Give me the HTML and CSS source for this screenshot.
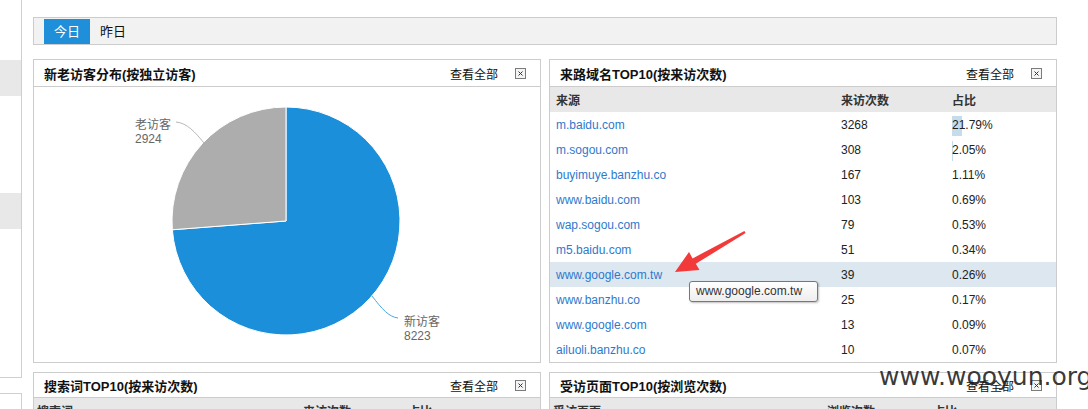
FILE: index.html
```html
<!DOCTYPE html>
<html lang="zh-CN">
<head>
<meta charset="utf-8">
<title>统计</title>
<link rel="stylesheet" href="styles.css">
</head>
<body>
<div class="page">
  <aside class="side">
    <div class="side-top">
      <div class="side-blk first"></div>
      <div class="side-blk second"></div>
    </div>
    <div class="side-bottom"></div>
  </aside>

  <main class="main">
    <div class="tabs">
      <span class="tab active">今日</span>
      <span class="tab">昨日</span>
    </div>

    <div class="grid">
      <section class="panel tall">
        <header class="panel-head">
          <h3 class="panel-title">新老访客分布(按独立访客)</h3>
          <span class="more">查看全部</span>
          <svg class="close" width="11" height="11" viewBox="0 0 11 11"><rect x="0.5" y="0.5" width="10" height="10" fill="#f4f4f4" stroke="#7b7b7b"/><path d="M3.5 3.5 L7.5 7.5 M7.5 3.5 L3.5 7.5" stroke="#333" stroke-width="1"/></svg>
        </header>
        <div class="pie-body">
          <svg class="pie" width="506" height="274" viewBox="0 0 506 274">
            <path d="M252 134 L138.34 142.75 A114 114 0 1 0 252 20 Z" fill="#1b8fd9" stroke="#fff" stroke-width="1"/>
            <path d="M252 134 L252 20 A114 114 0 0 0 138.34 142.75 Z" fill="#adadad" stroke="#fff" stroke-width="1"/>
            <path d="M142 35 C153 36 161 45 170 56" fill="none" stroke="#b8b8b8" stroke-width="1"/>
            <path d="M338 209 C348 222 355 230 364 231" fill="none" stroke="#4aa6e3" stroke-width="1"/>
            <text x="101" y="42" class="pie-label">老访客</text>
            <text x="101" y="56" class="pie-label">2924</text>
            <text x="370" y="239" class="pie-label">新访客</text>
            <text x="370" y="253" class="pie-label">8223</text>
          </svg>
        </div>
      </section>

      <section class="panel tall">
        <header class="panel-head">
          <h3 class="panel-title">来路域名TOP10(按来访次数)</h3>
          <span class="more">查看全部</span>
          <svg class="close" width="11" height="11" viewBox="0 0 11 11"><rect x="0.5" y="0.5" width="10" height="10" fill="#f4f4f4" stroke="#7b7b7b"/><path d="M3.5 3.5 L7.5 7.5 M7.5 3.5 L3.5 7.5" stroke="#333" stroke-width="1"/></svg>
        </header>
        <div class="table ref">
          <div class="tr th"><span>来源</span><span>来访次数</span><span>占比</span></div>
          <div class="tr"><a class="link">m.baidu.com</a><span>3268</span><span class="pct"><i class="bar" style="width:10px"></i><b>21.79%</b></span></div>
          <div class="tr"><a class="link">m.sogou.com</a><span>308</span><span class="pct"><i class="bar" style="width:1px"></i><b>2.05%</b></span></div>
          <div class="tr"><a class="link">buyimuye.banzhu.co</a><span>167</span><span class="pct"><b>1.11%</b></span></div>
          <div class="tr"><a class="link">www.baidu.com</a><span>103</span><span class="pct"><b>0.69%</b></span></div>
          <div class="tr"><a class="link">wap.sogou.com</a><span>79</span><span class="pct"><b>0.53%</b></span></div>
          <div class="tr"><a class="link">m5.baidu.com</a><span>51</span><span class="pct"><b>0.34%</b></span></div>
          <div class="tr hover"><a class="link">www.google.com.tw</a><span>39</span><span class="pct"><b>0.26%</b></span></div>
          <div class="tr"><a class="link">www.banzhu.co</a><span>25</span><span class="pct"><b>0.17%</b></span></div>
          <div class="tr"><a class="link">www.google.com</a><span>13</span><span class="pct"><b>0.09%</b></span></div>
          <div class="tr"><a class="link">ailuoli.banzhu.co</a><span>10</span><span class="pct"><b>0.07%</b></span></div>
        </div>
      </section>

      <section class="panel">
        <header class="panel-head">
          <h3 class="panel-title">搜索词TOP10(按来访次数)</h3>
          <span class="more">查看全部</span>
          <svg class="close" width="11" height="11" viewBox="0 0 11 11"><rect x="0.5" y="0.5" width="10" height="10" fill="#f4f4f4" stroke="#7b7b7b"/><path d="M3.5 3.5 L7.5 7.5 M7.5 3.5 L3.5 7.5" stroke="#333" stroke-width="1"/></svg>
        </header>
        <div class="table kw">
          <div class="tr th"><span>搜索词</span><span>来访次数</span><span>占比</span></div>
        </div>
      </section>

      <section class="panel">
        <header class="panel-head">
          <h3 class="panel-title">受访页面TOP10(按浏览次数)</h3>
          <span class="more">查看全部</span>
          <svg class="close" width="11" height="11" viewBox="0 0 11 11"><rect x="0.5" y="0.5" width="10" height="10" fill="#f4f4f4" stroke="#7b7b7b"/><path d="M3.5 3.5 L7.5 7.5 M7.5 3.5 L3.5 7.5" stroke="#333" stroke-width="1"/></svg>
        </header>
        <div class="table pg">
          <div class="tr th"><span>受访页面</span><span>浏览次数</span><span>占比</span></div>
        </div>
      </section>
    </div>
  </main>
</div>

<svg class="arrow" width="95" height="55" viewBox="0 0 95 55">
  <polygon points="15,47 39.5,45 35.8,38.8 85.6,8 84.4,6 32.6,33.4 29,27" fill="#f23a3a"/>
</svg>
<div class="tooltip">www.google.com.tw</div>
<div class="watermark">www.wooyun.org</div>
</body>
</html>
```

FILE: styles.css
```css
* { box-sizing: border-box; }
html, body { margin: 0; padding: 0; }
body {
  font-family: "Liberation Sans", "Noto Sans CJK SC", sans-serif;
  font-size: 12px;
  color: #222;
  background: #fff;
  overflow: hidden;
  position: relative;
  width: 1088px;
  height: 409px;
}
.page { display: flex; align-items: flex-start; }

.side { width: 22px; flex: none; }
.side-top {
  height: 378px;
  border-right: 1px solid #cfcfcf;
  border-bottom: 1px solid #cfcfcf;
  padding-top: 60px;
}
.side-blk { height: 36px; background: #e8e8e8; }
.side-blk.second { margin-top: 97px; }
.side-bottom {
  margin-top: 15px;
  height: 40px;
  border-top: 1px solid #cfcfcf;
  border-right: 1px solid #cfcfcf;
}

.main { margin-left: 11px; width: 1024px; padding-top: 17px; }

.tabs {
  display: flex;
  height: 28px;
  padding: 1px 10px 0;
  border: 1px solid #cccccc;
  background: #f2f2f2;
}
.tab {
  height: 25px;
  line-height: 25px;
  padding: 0 10px;
  font-size: 13px;
  color: #111;
}
.tab.active { background: #1e8fd8; color: #fff; }

.grid {
  margin-top: 14px;
  display: grid;
  grid-template-columns: 508px 508px;
  column-gap: 8px;
  row-gap: 9px;
}
.panel { border: 1px solid #cccccc; background: #fff; }
.panel.tall { height: 304px; }

.panel-head {
  display: flex;
  align-items: center;
  height: 27px;
  padding: 0 14px 0 10px;
  border-bottom: 1px solid #cccccc;
}
.panel:not(.tall) .panel-head { height: 25px; }
.panel-title {
  flex: 1;
  margin: 0;
  font-size: 13px;
  font-weight: bold;
  color: #111;
}
.more { font-size: 12px; color: #111; }
.close { margin-left: 17px; display: block; }

.pie-body { height: 274px; }
.pie { display: block; }
.pie-label {
  font-family: "Liberation Sans", "Noto Sans CJK SC", sans-serif;
  font-size: 12px;
  fill: #666;
}

.table { display: flex; flex-direction: column; }
.tr {
  display: grid;
  grid-template-columns: 285px 111px 1fr;
  height: 25px;
  align-items: center;
}
.tr > * { padding-left: 6px; }
.th { background: #e8e8e8; font-weight: bold; color: #333; }
.kw .tr { grid-template-columns: 266px 105px 1fr; }
.pg .tr { grid-template-columns: 274px 106px 1fr; }
.kw .tr > *, .pg .tr > * { padding-left: 3px; }
.tr.hover { background: #dce7f0; }
.link { color: #2f79cc; text-decoration: none; }
.pct { position: relative; height: 25px; line-height: 26px; }
.pct b { position: relative; font-weight: normal; }
.bar {
  position: absolute;
  left: 6px;
  top: 4px;
  height: 20px;
  background: #c6dceb;
}

.arrow { position: absolute; left: 660px; top: 225px; }
.tooltip {
  position: absolute;
  left: 689px;
  top: 281px;
  width: 129px;
  height: 21px;
  line-height: 19px;
  padding: 0 6px;
  border: 1px solid #777;
  border-radius: 3px;
  background: linear-gradient(#ffffff, #eeeeee);
  box-shadow: 1px 1px 2px rgba(0,0,0,0.25);
  color: #333;
  font-size: 12px;
}
.watermark {
  position: absolute;
  left: 879px;
  top: 362px;
  font-family: "DejaVu Sans", sans-serif;
  font-size: 25px;
  color: rgba(30,30,30,0.9);
  white-space: nowrap;
}
```
